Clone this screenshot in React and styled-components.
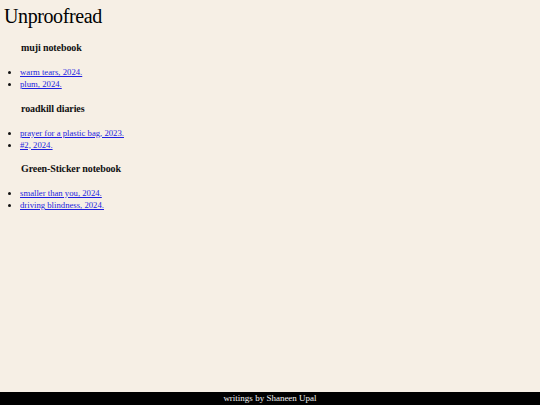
import React from "react";
import styled, { createGlobalStyle } from "styled-components";

const GlobalStyle = createGlobalStyle`
  html, body {
    margin: 0;
    padding: 0;
    background: #f6efe5;
  }
  body {
    font-family: "Liberation Serif", "DejaVu Serif", serif;
    color: #111;
  }
`;

const Page = styled.div`
  min-height: 100vh;
  display: flex;
  flex-direction: column;
`;

const Main = styled.main`
  flex: 1;
  padding: 4px 4px 0 4px;
`;

const Title = styled.h1`
  margin: 0 0 14px 0;
  font-size: 20px;
  line-height: 24px;
  font-weight: normal;
  letter-spacing: -0.4px;
  color: #000;
`;

const Notebook = styled.section`
  margin-bottom: 12.5px;
`;

const Heading = styled.h3`
  margin: 0 0 12px 17px;
  font-size: 10px;
  line-height: 12px;
  font-weight: bold;
  letter-spacing: -0.1px;
`;

const List = styled.ul`
  margin: 0;
  padding-left: 16px;
  font-size: 8.7px;
  line-height: 12px;
`;

const Item = styled.li``;

const Link = styled.a`
  color: #1f1fe0;
  text-decoration: underline;
`;

const Footer = styled.footer`
  background: #000;
  color: #f3f3f3;
  text-align: center;
  font-size: 9px;
  line-height: 13px;
  height: 13px;
`;

const notebooks = [
  {
    name: "muji notebook",
    pieces: ["warm tears, 2024.", "plum, 2024."],
  },
  {
    name: "roadkill diaries",
    pieces: ["prayer for a plastic bag, 2023.", "#2, 2024."],
  },
  {
    name: "Green-Sticker notebook",
    pieces: ["smaller than you, 2024.", "driving blindness, 2024."],
  },
];

export default function App() {
  return (
    <Page>
      <GlobalStyle />
      <Main>
        <Title>Unproofread</Title>
        {notebooks.map((nb) => (
          <Notebook key={nb.name}>
            <Heading>{nb.name}</Heading>
            <List>
              {nb.pieces.map((p) => (
                <Item key={p}>
                  <Link href="#">{p}</Link>
                </Item>
              ))}
            </List>
          </Notebook>
        ))}
      </Main>
      <Footer>writings by Shaneen Upal</Footer>
    </Page>
  );
}
